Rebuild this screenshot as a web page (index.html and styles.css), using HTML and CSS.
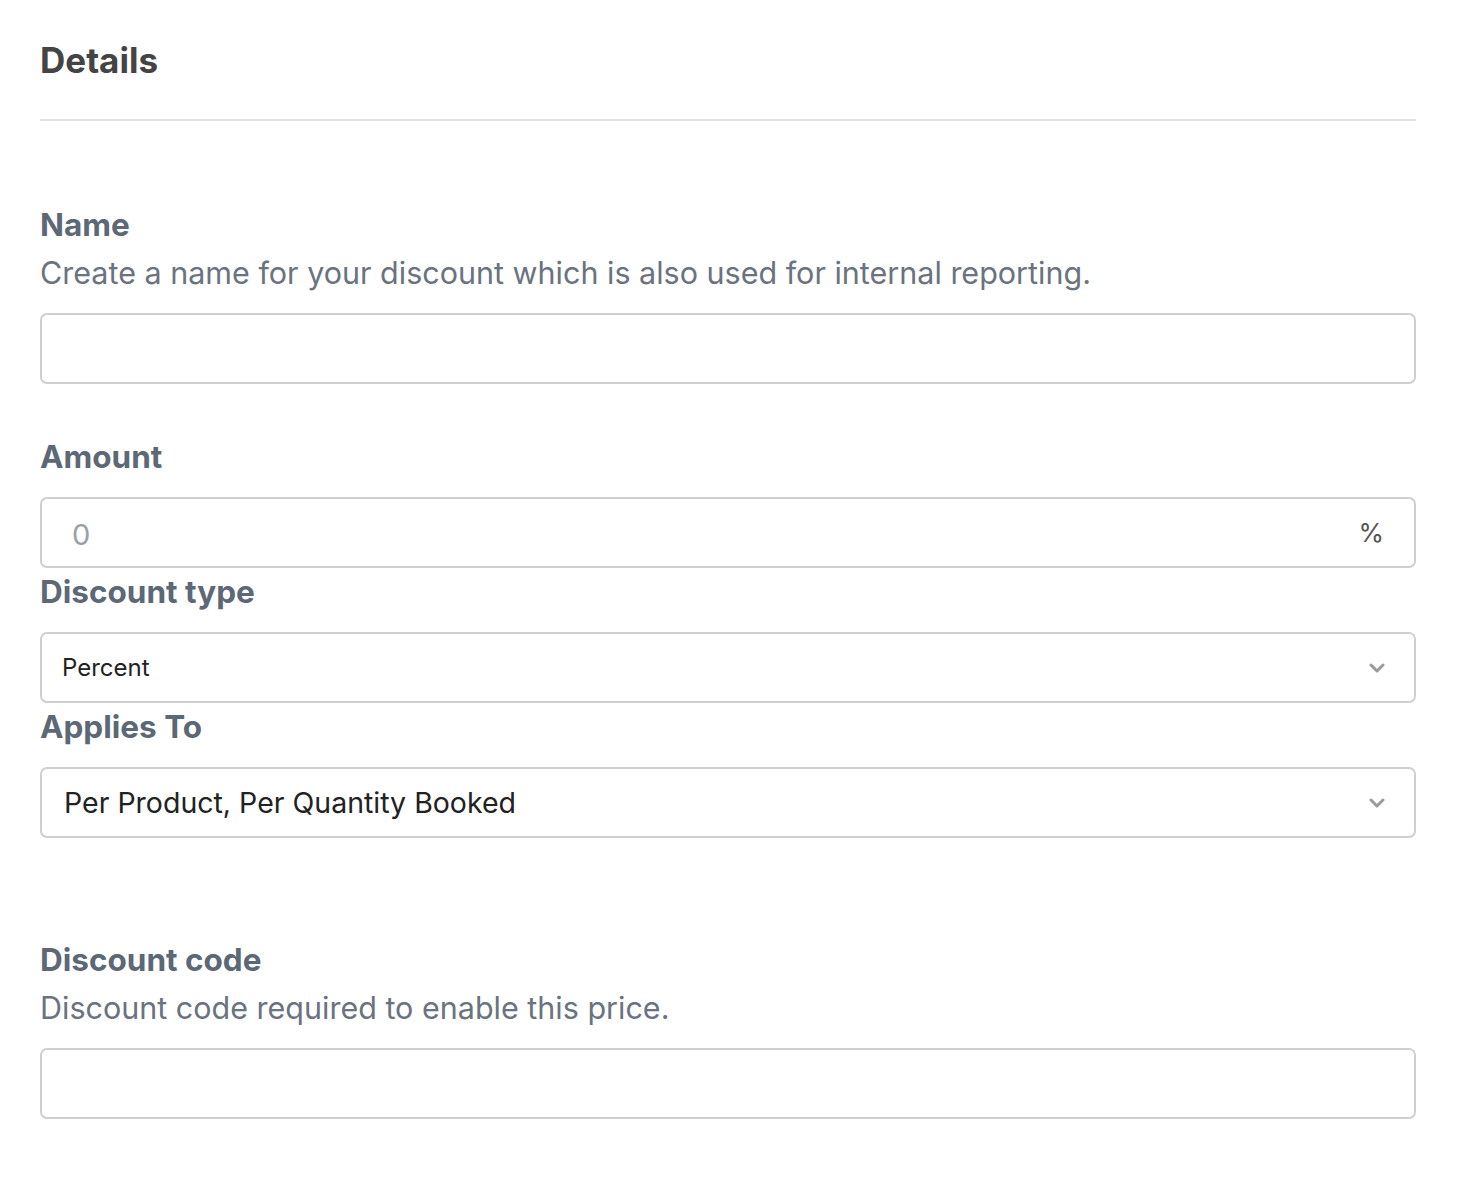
FILE: index.html
```html
<!DOCTYPE html>
<html lang="en">
<head>
  <meta charset="UTF-8" />
  <title>Discount details</title>
  <link rel="stylesheet" href="styles.css">
</head>
<body>
  <div class="panel">
    <h2 class="panel-title">Details</h2>
    <hr class="divider" />

    <div class="field field-name">
      <div class="field-label">Name</div>
      <div class="field-help">Create a name for your discount which is also used for internal reporting.</div>
      <input class="text-input" type="text" />
    </div>

    <div class="field field-amount">
      <div class="field-label">Amount</div>
      <div class="input-group">
        <input class="text-input amount-input" type="text" placeholder="0" />
        <span class="input-suffix">%</span>
      </div>
    </div>

    <div class="field field-tight">
      <div class="field-label">Discount type</div>
      <div class="select-box select-small">
        <span>Percent</span>
        <svg class="chevron" viewBox="0 0 18 10" width="18" height="10"><path d="M3 2l6 6 6-6" fill="none" stroke="currentColor" stroke-width="3" stroke-linecap="round" stroke-linejoin="round"/></svg>
      </div>
    </div>

    <div class="field field-tight">
      <div class="field-label">Applies To</div>
      <div class="select-box">
        <span>Per Product, Per Quantity Booked</span>
        <svg class="chevron" viewBox="0 0 18 10" width="18" height="10"><path d="M3 2l6 6 6-6" fill="none" stroke="currentColor" stroke-width="3" stroke-linecap="round" stroke-linejoin="round"/></svg>
      </div>
    </div>

    <div class="field field-code">
      <div class="field-label">Discount code</div>
      <div class="field-help">Discount code required to enable this price.</div>
      <input class="text-input" type="text" />
    </div>
  </div>
</body>
</html>
```

FILE: styles.css
```css
html, body {
  margin: 0;
  padding: 0;
  background: #fff;
  font-family: 'Inter', 'Liberation Sans', sans-serif;
}

.panel {
  width: 1376px;
  padding: 40px 0 0 40px;
}

.panel-title {
  margin: 0;
  font-size: 35px;
  line-height: 40px;
  font-weight: 700;
  color: #444;
}

.divider {
  margin: 39px 0 0;
  border: none;
  border-top: 2px solid #e2e2e2;
}

.field {
  display: flex;
  flex-direction: column;
}

.field-name { margin-top: 84px; }
.field-amount { margin-top: 53px; }
.field-tight { margin-top: 4px; }
.field-code { margin-top: 102px; }

.field-label {
  font-size: 31.5px;
  line-height: 40px;
  font-weight: 700;
  color: #5d6876;
}

.field-help {
  margin-top: 8px;
  font-size: 30.5px;
  line-height: 40px;
  color: #6b7280;
}

.text-input,
.select-box,
.input-group {
  margin-top: 20px;
  height: 71px;
  box-sizing: border-box;
  border: 2px solid #cfcfcf;
  border-radius: 7px;
  background: #fff;
}

.text-input {
  width: 100%;
  padding: 0 30px;
  font-family: inherit;
  font-size: 28px;
  outline: none;
}

.input-group {
  display: flex;
  align-items: center;
}

.amount-input {
  flex: 1;
  margin: 0;
  height: 100%;
  border: none;
  background: transparent;
  padding-left: 30px;
  padding-top: 4px;
  font-size: 29px;
}

.amount-input::placeholder {
  color: #9aa0a6;
}

.input-suffix {
  padding-right: 30px;
  font-size: 26px;
  color: #555;
}

.select-box {
  display: flex;
  align-items: center;
  justify-content: space-between;
  padding: 0 28px 0 22px;
  font-size: 28.5px;
  color: #222;
}

.select-small {
  padding-left: 20px;
  font-size: 24px;
}

.chevron {
  color: #9a9a9a;
}
```
